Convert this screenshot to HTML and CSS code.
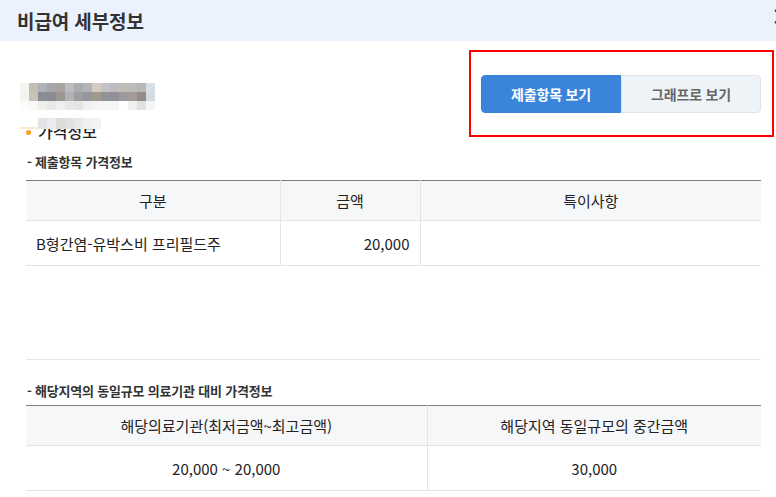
FILE: index.html
```html
<!DOCTYPE html>
<html lang="ko">
<head>
<meta charset="utf-8">
<title>비급여 세부정보</title>
<link rel="stylesheet" href="styles.css">
</head>
<body>
<div class="modal">
  <header class="modal-header">
    <h1 class="modal-title">비급여 세부정보</h1>
    <svg class="modal-close" width="15" height="15" viewBox="0 0 15 15" aria-label="닫기">
      <path d="M1 1 L14 14 M14 1 L1 14" stroke="#444" stroke-width="2" fill="none"/>
    </svg>
  </header>
  <main class="modal-body">
    <div class="top-row">
      <div class="info">
        <svg class="mosaic" width="135" height="27" viewBox="0 0 135 27" shape-rendering="crispEdges">
          <g>
            <rect x="0" y="0" width="9" height="9" fill="#f5f3f0"/><rect x="9" y="0" width="9" height="9" fill="#c4bfb5"/><rect x="18" y="0" width="9" height="9" fill="#b0b3b5"/><rect x="27" y="0" width="9" height="9" fill="#a6a5aa"/><rect x="36" y="0" width="9" height="9" fill="#a9a3a2"/><rect x="45" y="0" width="9" height="9" fill="#bcbcbf"/><rect x="54" y="0" width="9" height="9" fill="#a9adaf"/><rect x="63" y="0" width="9" height="9" fill="#b3b4b7"/><rect x="72" y="0" width="9" height="9" fill="#d6cbc1"/><rect x="81" y="0" width="9" height="9" fill="#c2c2c8"/><rect x="90" y="0" width="9" height="9" fill="#bdbbbf"/><rect x="99" y="0" width="9" height="9" fill="#bdbcb7"/><rect x="108" y="0" width="9" height="9" fill="#bebbbc"/><rect x="117" y="0" width="9" height="9" fill="#b8b7b3"/><rect x="126" y="0" width="9" height="9" fill="#d7dfe6"/>
            <rect x="0" y="9" width="9" height="9" fill="#f4f3f0"/><rect x="9" y="9" width="9" height="9" fill="#c7c3b9"/><rect x="18" y="9" width="9" height="9" fill="#888d96"/><rect x="27" y="9" width="9" height="9" fill="#8c8a94"/><rect x="36" y="9" width="9" height="9" fill="#9c9891"/><rect x="45" y="9" width="9" height="9" fill="#b2b1b6"/><rect x="54" y="9" width="9" height="9" fill="#9d9ca1"/><rect x="63" y="9" width="9" height="9" fill="#97969f"/><rect x="72" y="9" width="9" height="9" fill="#a39a8f"/><rect x="81" y="9" width="9" height="9" fill="#8f9494"/><rect x="90" y="9" width="9" height="9" fill="#958d98"/><rect x="99" y="9" width="9" height="9" fill="#9a9a9c"/><rect x="108" y="9" width="9" height="9" fill="#a59a9a"/><rect x="117" y="9" width="9" height="9" fill="#8f8d89"/><rect x="126" y="9" width="9" height="9" fill="#d5dce1"/>
            <rect x="0" y="18" width="9" height="9" fill="#fdfdfb"/><rect x="9" y="18" width="9" height="9" fill="#faf9f4"/><rect x="18" y="18" width="9" height="9" fill="#f0efee"/><rect x="27" y="18" width="9" height="9" fill="#e9e9e9"/><rect x="36" y="18" width="9" height="9" fill="#efefef"/><rect x="45" y="18" width="9" height="9" fill="#e7e7e9"/><rect x="54" y="18" width="9" height="9" fill="#e4e4e4"/><rect x="63" y="18" width="9" height="9" fill="#f1f1f3"/><rect x="72" y="18" width="9" height="9" fill="#f4f4f6"/><rect x="81" y="18" width="9" height="9" fill="#f6f6f8"/><rect x="90" y="18" width="9" height="9" fill="#f4f4f6"/><rect x="99" y="18" width="9" height="9" fill="#fefefe"/><rect x="108" y="18" width="9" height="9" fill="#efefef"/><rect x="117" y="18" width="9" height="9" fill="#e1e1e1"/><rect x="126" y="18" width="9" height="9" fill="#f3f5f7"/>
          </g>
        </svg>
        <h2 class="section-title">
          <span class="bullet"></span>가격정보
          <svg class="mosaic-small" width="81" height="11" viewBox="0 0 81 11" shape-rendering="crispEdges">
            <rect x="0" y="9" width="18" height="2" fill="#fbe9cf"/>
            <rect x="18" y="0" width="9" height="11" fill="#e4e4e6"/><rect x="27" y="0" width="9" height="11" fill="#ebeaec"/><rect x="36" y="0" width="9" height="11" fill="#dddcd8"/><rect x="45" y="0" width="9" height="11" fill="#e1e1e1"/><rect x="54" y="0" width="9" height="11" fill="#e8e8ea"/><rect x="63" y="0" width="9" height="11" fill="#f1eff2"/><rect x="72" y="0" width="9" height="11" fill="#f3f3f5"/>
          </svg>
        </h2>
      </div>
      <div class="tabs">
        <button class="tab tab-active">제출항목 보기</button>
        <button class="tab">그래프로 보기</button>
        <span class="highlight-box"></span>
      </div>
    </div>

    <h3 class="sub-title">- 제출항목 가격정보</h3>
    <table class="data-table">
      <colgroup><col class="c-name"><col class="c-amount"><col></colgroup>
      <thead>
        <tr><th>구분</th><th>금액</th><th>특이사항</th></tr>
      </thead>
      <tbody>
        <tr><td class="left">B형간염-유박스비 프리필드주</td><td class="right">20,000</td><td></td></tr>
      </tbody>
    </table>

    <div class="divider"></div>

    <h3 class="sub-title sub-title-2">- 해당지역의 동일규모 의료기관 대비 가격정보</h3>
    <table class="data-table data-table-2">
      <colgroup><col class="c-range"><col></colgroup>
      <thead>
        <tr><th>해당의료기관(최저금액~최고금액)</th><th>해당지역 동일규모의 중간금액</th></tr>
      </thead>
      <tbody>
        <tr><td class="center">20,000 ~ 20,000</td><td class="center">30,000</td></tr>
      </tbody>
    </table>
  </main>
</div>
</body>
</html>
```

FILE: styles.css
```css
* { box-sizing: border-box; }
html, body { margin: 0; padding: 0; background: #fff; }
body {
  font-family: "Noto Sans CJK KR", "Noto Sans", sans-serif;
  color: #222;
  width: 776px;
  height: 497px;
  overflow: hidden;
}
.modal-header {
  height: 41px;
  background: #ebf2fd;
  display: flex;
  align-items: center;
  padding-left: 17px;
  overflow: hidden;
}
.modal-title {
  margin: 0;
  font-size: 19px;
  font-weight: 700;
  color: #333;
  letter-spacing: -0.1px;
  line-height: 24px;
}
.modal-close {
  flex: none;
  margin-left: auto;
  margin-right: -13px;
  margin-top: -8px;
  display: block;
}
.modal-body {
  padding: 0 15px 0 26px;
}
.top-row {
  display: flex;
  justify-content: space-between;
  align-items: flex-start;
}
.info {
  padding-top: 42px;
  margin-left: -6px;
}
.mosaic { display: block; }
.section-title {
  position: relative;
  margin: 10px 0 0 6px;
  padding-left: 12px;
  font-size: 16px;
  font-weight: 500;
  line-height: 22px;
  color: #222;
}
.bullet {
  position: absolute;
  left: 0;
  top: 10px;
  width: 5px;
  height: 5px;
  border-radius: 50%;
  background: #f5a31a;
}
.mosaic-small {
  position: absolute;
  left: -6px;
  top: -2px;
}
.tabs {
  position: relative;
  display: flex;
  margin-top: 34px;
}
.tab {
  width: 140px;
  height: 38px;
  border: 1px solid #dfe4ea;
  background: #eef3f8;
  color: #666;
  font-family: inherit;
  font-size: 14px;
  font-weight: 700;
  padding: 0;
  border-radius: 0 4px 4px 0;
  letter-spacing: -0.2px;
}
.tab-active {
  width: 140px;
  background: #3a84dc;
  border-color: #3a84dc;
  color: #fff;
  border-radius: 4px 0 0 4px;
}
.highlight-box {
  position: absolute;
  left: -12px;
  top: -25px;
  width: 305px;
  height: 87px;
  border: 2px solid #f00;
  pointer-events: none;
}
.sub-title {
  margin: 11px 0 0 1px;
  font-size: 13px;
  font-weight: 700;
  line-height: 18px;
  color: #333;
  letter-spacing: -0.2px;
}
.data-table {
  width: 735px;
  margin-top: 9px;
  border-collapse: collapse;
  table-layout: fixed;
  border-top: 1px solid #7c7c7c;
}
.c-name { width: 254px; }
.c-amount { width: 140px; }
.c-range { width: 401px; }
.data-table th {
  height: 40px;
  background: #f6f7f9;
  font-weight: 400;
  font-size: 15px;
  color: #222;
  border-bottom: 1px solid #e4e4e4;
  border-left: 1px solid #e4e4e4;
  padding: 0;
}
.data-table td {
  height: 45px;
  font-size: 15px;
  color: #222;
  border-bottom: 1px solid #e4e4e4;
  border-left: 1px solid #e4e4e4;
  padding: 0 10px;
}
.data-table th:first-child,
.data-table td:first-child { border-left: none; }
.data-table td.left { text-align: left; }
.data-table td.right { text-align: right; }
.data-table td.center { text-align: center; }
.divider {
  height: 1px;
  width: 735px;
  background: #e8e8e8;
  margin-top: 93px;
}
.sub-title-2 {
  margin-top: 22px;
}
.data-table-2 {
  margin-top: 5px;
}
```
